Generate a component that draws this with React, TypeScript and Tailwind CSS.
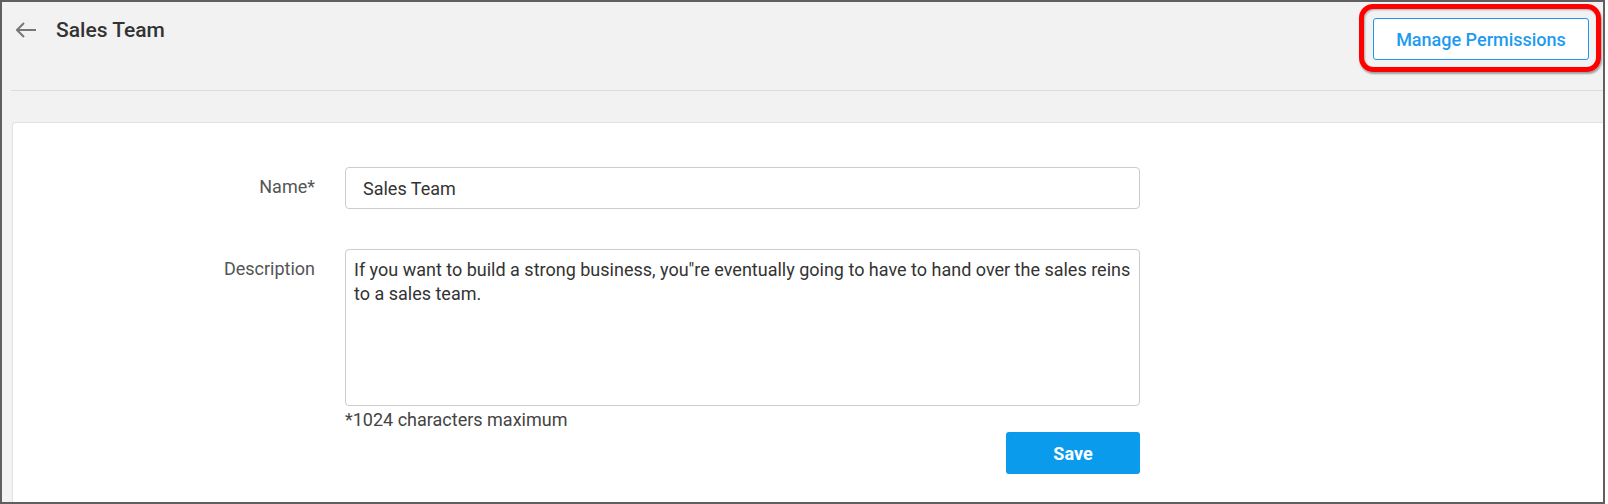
import React from "react";

export default function App() {
  return (
    <div className="w-[1608px] h-[504px] overflow-hidden bg-white font-['Roboto','Liberation_Sans',sans-serif]">
      <div className="relative w-[1605px] h-[504px] border-2 border-[#5f5f5f] bg-[#f2f2f2] overflow-hidden">
        {/* Header */}
        <div className="ml-[9px] h-[89px] border-b border-[#dcdcdc] flex items-start justify-between">
          <div className="flex items-center pt-[14px] pl-[5px]">
            <svg width="20" height="16" viewBox="0 0 20 16" className="shrink-0">
              <path d="M1 8H20" stroke="#777" strokeWidth="2" fill="none" />
              <path d="M8 1L1 8L8 15" stroke="#777" strokeWidth="2" fill="none" strokeLinejoin="miter" />
            </svg>
            <span className="ml-[20px] text-[21px] leading-[28px] font-medium text-[#333]">Sales Team</span>
          </div>
          <button className="mt-[16px] mr-[14px] w-[216px] h-[42px] bg-white border border-[#2196f3] rounded-[3px] text-[18px] font-medium text-[#1e9bf0]">
            Manage Permissions
          </button>
        </div>

        {/* Card */}
        <div className="mt-[31px] ml-[10px] h-[420px] bg-white border border-r-0 border-[#e2e2e2] rounded-tl-[4px] pt-[44px]">
          <div className="grid grid-cols-[302px_795px] gap-x-[30px]">
            <div className="flex items-center justify-end h-[42px] pb-[2px] text-[18px] leading-[24px] text-[#555]">Name*</div>
            <input
              readOnly
              defaultValue="Sales Team"
              className="h-[42px] w-[795px] border border-[#cccccc] rounded-[4px] pl-[17px] pr-[8px] text-[18px] text-[#333] outline-none bg-white"
            />

            <div className="mt-[40px] pt-[8px] text-right text-[18px] leading-[24px] text-[#555]">Description</div>
            <div className="mt-[40px] flex flex-col">
              <textarea
                readOnly
                defaultValue={'If you want to build a strong business, you"re eventually going to have to hand over the sales reins to a sales team.'}
                className="h-[157px] w-[795px] resize-none border border-[#cccccc] rounded-[4px] px-[8px] py-[8px] text-[18px] leading-[24px] text-[#333] outline-none bg-white"
              />
              <div className="mt-[2px] text-[18px] leading-[24px] text-[#444]">*1024 characters maximum</div>
              <div className="flex justify-end">
                <button className="w-[134px] h-[42px] bg-[#0a9bed] rounded-[3px] text-white text-[18px] font-bold">Save</button>
              </div>
            </div>
          </div>
        </div>

        {/* Annotation highlight */}
        <div className="absolute left-[1357px] top-[2px] w-[242px] h-[68px] border-[5px] border-[#ff0000] rounded-[14px] shadow-[1px_2px_2px_rgba(0,0,0,0.35),inset_1px_1px_2px_rgba(0,0,0,0.3)] pointer-events-none" />
      </div>
    </div>
  );
}
